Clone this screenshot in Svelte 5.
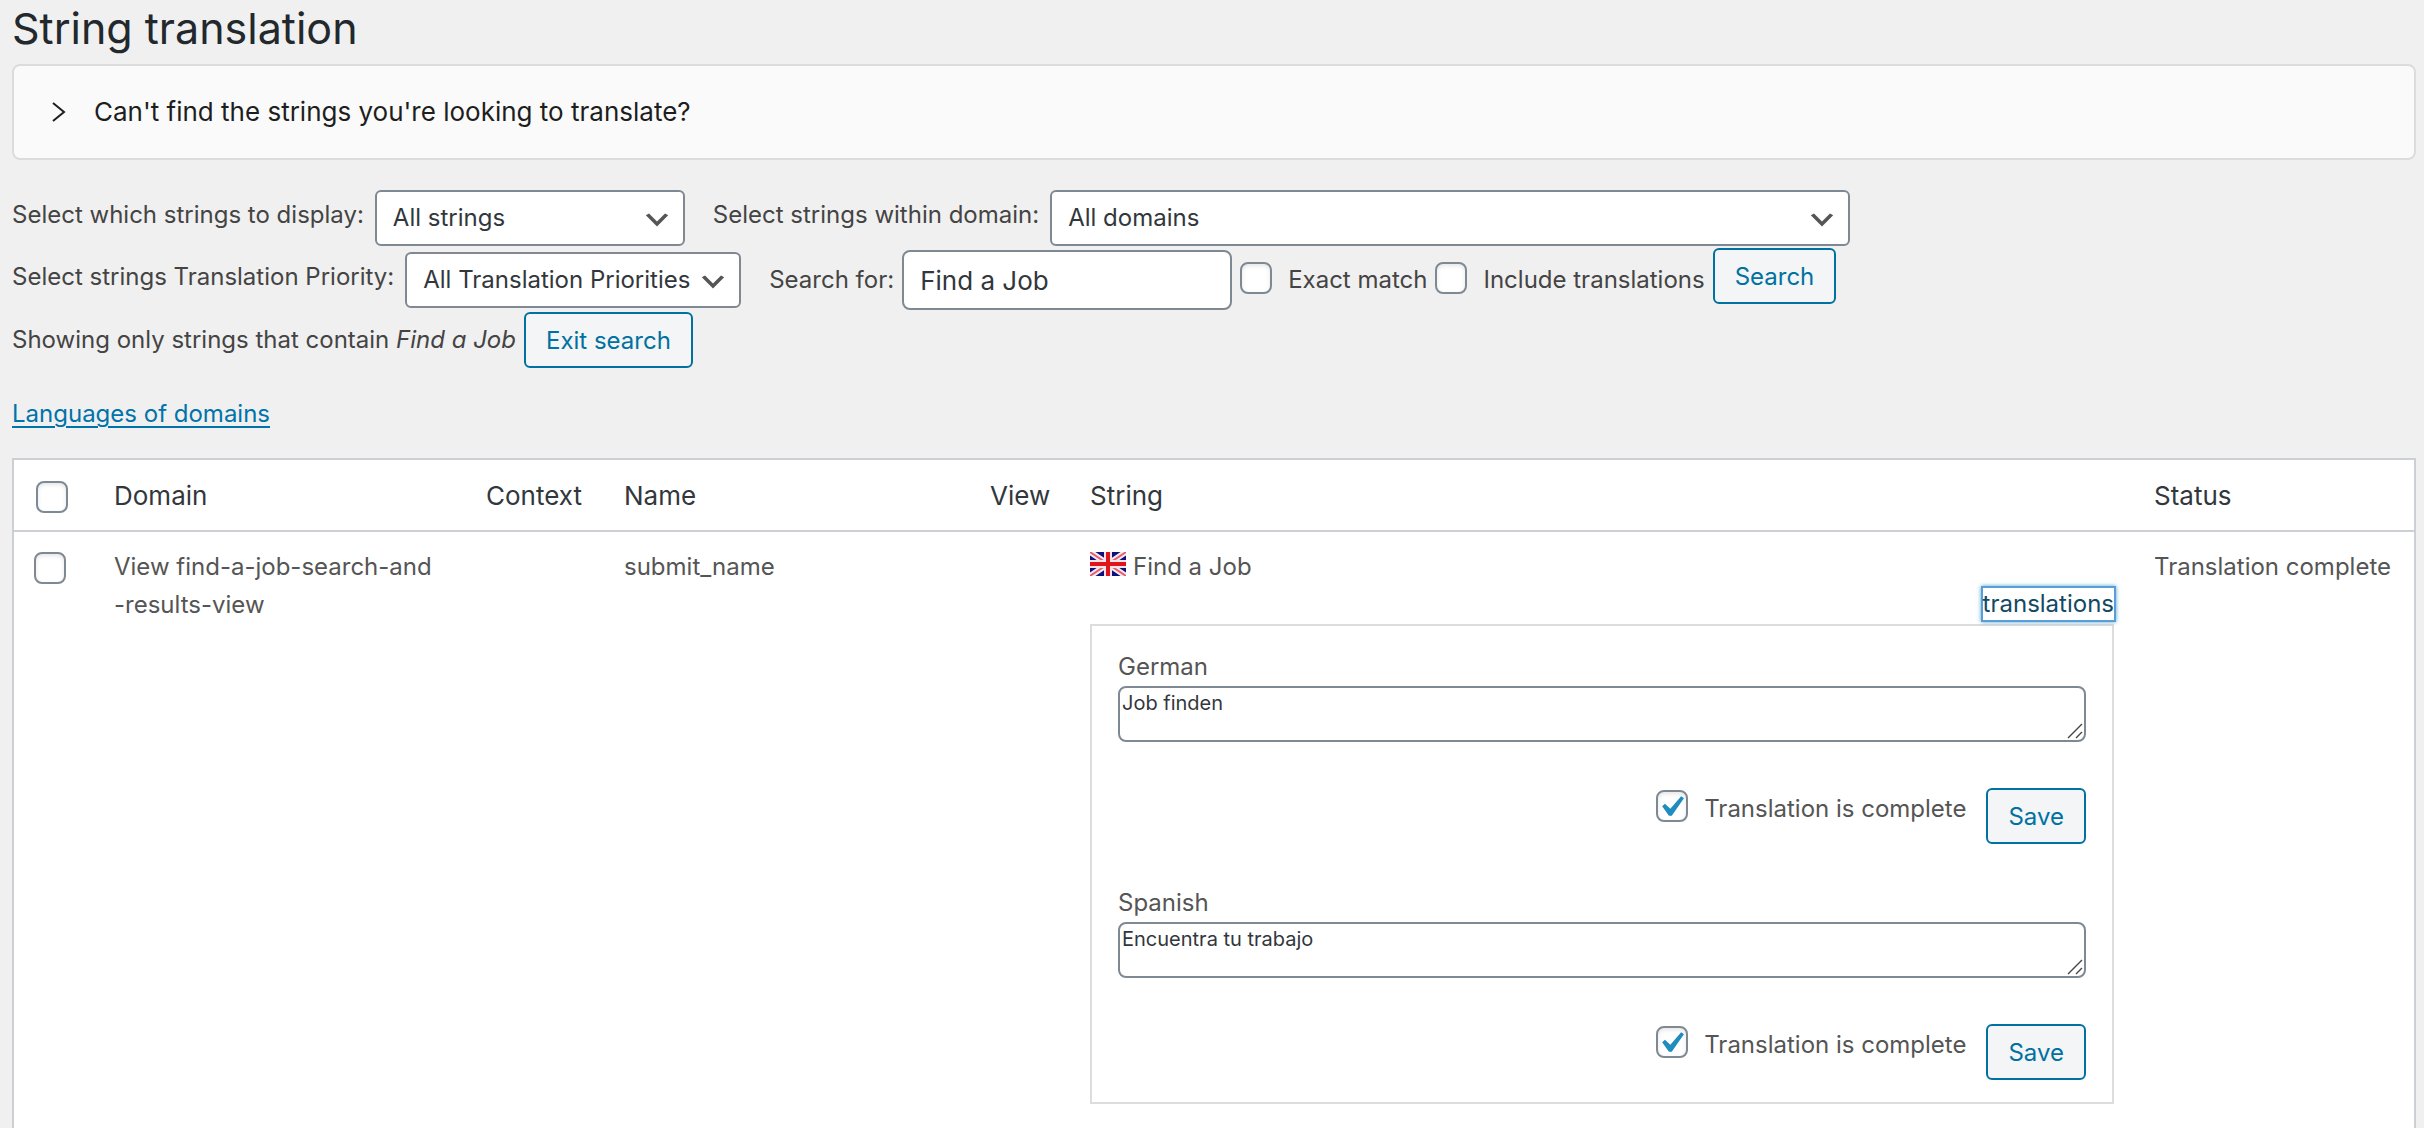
<script>
    let filter = 'all';
    let domain = 'all';
    let priority = 'all';
    let search = 'Find a Job';
    let exactMatch = false;
    let includeTranslations = false;

    const strings = [
        {
            id: 1,
            domain: ['View find-a-job-search-and', '-results-view'],
            context: '',
            name: 'submit_name',
            value: 'Find a Job',
            status: 'Translation complete',
            translations: [
                { code: 'de', language: 'German', value: 'Job finden', complete: true },
                { code: 'es', language: 'Spanish', value: 'Encuentra tu trabajo', complete: true },
            ],
        },
    ];
</script>

<div class="page">
    <h1>String translation</h1>

    <details class="help">
        <summary>
            <svg class="arrow" viewBox="0 0 14 20" aria-hidden="true">
                <path d="M1 1l11 9-11 9" />
            </svg>
            Can't find the strings you're looking to translate?
        </summary>
    </details>

    <form class="filters" on:submit|preventDefault>
        <div class="row">
            <label class="raised" for="filter">Select which strings to display:</label>
            <div class="select status">
                <select id="filter" bind:value={filter}>
                    <option value="all">All strings</option>
                </select>
                <svg viewBox="0 0 20 20" aria-hidden="true"><path d="M5 6l5 5 5-5 2 1-7 7-7-7 2-1z" /></svg>
            </div>
            <label class="raised next" for="domain">Select strings within domain:</label>
            <div class="select domain">
                <select id="domain" bind:value={domain}>
                    <option value="all">All domains</option>
                </select>
                <svg viewBox="0 0 20 20" aria-hidden="true"><path d="M5 6l5 5 5-5 2 1-7 7-7-7 2-1z" /></svg>
            </div>
        </div>

        <div class="row search">
            <label class="raised" for="priority">Select strings Translation Priority:</label>
            <div class="select priority">
                <select id="priority" bind:value={priority}>
                    <option value="all">All Translation Priorities</option>
                </select>
                <svg viewBox="0 0 20 20" aria-hidden="true"><path d="M5 6l5 5 5-5 2 1-7 7-7-7 2-1z" /></svg>
            </div>
            <label class="next" for="search">Search for:</label>
            <input id="search" type="text" bind:value={search} />
            <div class="check">
                <input id="exact" type="checkbox" bind:checked={exactMatch} />
                <label for="exact">Exact match</label>
            </div>
            <div class="check">
                <input id="include" type="checkbox" bind:checked={includeTranslations} />
                <label for="include">Include translations</label>
            </div>
            <button class="button" type="submit">Search</button>
        </div>

        <div class="row">
            <span>Showing only strings that contain <em>Find a Job</em></span>
            <button class="button" type="button">Exit search</button>
        </div>
    </form>

    <a class="domains-link" href="#domains">Languages of domains</a>

    <table>
        <colgroup>
            <col class="col-check" />
            <col class="col-domain" />
            <col class="col-context" />
            <col class="col-name" />
            <col class="col-view" />
            <col />
            <col class="col-status" />
        </colgroup>
        <thead>
            <tr>
                <th class="cell-check"><input type="checkbox" aria-label="Select all strings" /></th>
                <th>Domain</th>
                <th>Context</th>
                <th>Name</th>
                <th>View</th>
                <th>String</th>
                <th>Status</th>
            </tr>
        </thead>
        <tbody>
            {#each strings as string (string.id)}
                <tr>
                    <td class="cell-check"><input type="checkbox" aria-label="Select string" /></td>
                    <td>{string.domain[0]}<br />{string.domain[1]}</td>
                    <td>{string.context}</td>
                    <td>{string.name}</td>
                    <td></td>
                    <td>
                        <div class="original">
                            <svg class="flag" viewBox="0 0 36 24" role="img" aria-label="English">
                                <rect width="36" height="24" fill="#10107c" />
                                <path d="M0 0l36 24M36 0L0 24" stroke="#f3eef4" stroke-width="6" />
                                <path d="M0 0l36 24M36 0L0 24" stroke="#e8626c" stroke-width="2" />
                                <path d="M18 0v24M0 12h36" stroke="#f3e4e8" stroke-width="8" />
                                <path d="M18 0v24M0 12h36" stroke="#e0141c" stroke-width="4" />
                            </svg>
                            <span>{string.value}</span>
                        </div>
                        <div class="toggle"><a href="#translations">translations</a></div>
                        <div class="translations">
                            {#each string.translations as item (item.code)}
                                <div class="translation">
                                    <label for="text-{item.code}">{item.language}</label>
                                    <div class="textarea">
                                        <textarea id="text-{item.code}" spellcheck="false" bind:value={item.value}></textarea>
                                        <svg viewBox="0 0 16 16" aria-hidden="true">
                                            <path d="M1 15L15 1M9 15l6-6" />
                                        </svg>
                                    </div>
                                    <div class="actions">
                                        <input id="complete-{item.code}" type="checkbox" bind:checked={item.complete} />
                                        <label for="complete-{item.code}">Translation is complete</label>
                                        <button class="button" type="button">Save</button>
                                    </div>
                                </div>
                            {/each}
                        </div>
                    </td>
                    <td>{string.status}</td>
                </tr>
            {/each}
        </tbody>
    </table>
</div>

<style>
    :global(body) {
        background: #f0f0f0;
    }
    .page {
        box-sizing: border-box;
        height: 100vh;
        overflow-y: auto;
        scrollbar-width: none;
        padding: 0 8px 0 12px;
        color: #444;
        font-family: Inter, "Liberation Sans", sans-serif;
        font-size: 24px;
        line-height: 38px;
    }
    h1 {
        margin: 0;
        padding-bottom: 8px;
        color: #23282d;
        font-size: 43px;
        font-weight: 400;
        line-height: 56px;
    }
    .help {
        border: 2px solid #dcdcde;
        border-radius: 8px;
        background: #fafafa;
    }
    summary {
        display: flex;
        align-items: center;
        gap: 28px;
        padding: 27px 38px;
        color: #1e1e1e;
        font-size: 26px;
        list-style: none;
        cursor: pointer;
    }
    .arrow {
        width: 14px;
        height: 20px;
        fill: none;
        stroke: #1e1e1e;
        stroke-width: 2;
    }
    .filters {
        display: flex;
        flex-direction: column;
        gap: 2px;
        padding: 30px 0 27px;
    }
    .row {
        display: flex;
        align-items: center;
        gap: 8px;
        white-space: nowrap;
    }
    .row.search {
        height: 64px;
        margin-bottom: -2px;
    }
    .raised {
        margin-bottom: 6px;
    }
    .next {
        margin-left: 20px;
    }
    select,
    input,
    textarea,
    button {
        box-sizing: border-box;
        margin: 0;
        font-family: inherit;
    }
    .select {
        position: relative;
        margin-left: 3px;
    }
    .status {
        width: 310px;
    }
    .domain {
        width: 800px;
    }
    .priority {
        width: 336px;
    }
    select {
        display: block;
        width: 100%;
        height: 56px;
        padding: 0 48px 2px 16px;
        border: 2px solid #7e8993;
        border-radius: 6px;
        background: #fff;
        color: #32373c;
        font-size: 24px;
        appearance: none;
    }
    .select svg {
        position: absolute;
        top: 14px;
        right: 12px;
        width: 32px;
        height: 32px;
        fill: #555;
        pointer-events: none;
    }
    input[type="text"] {
        width: 330px;
        height: 60px;
        padding: 0 16px;
        border: 2px solid #7e8993;
        border-radius: 8px;
        background: #fff;
        color: #32373c;
        font-size: 26px;
    }
    input[type="checkbox"] {
        display: block;
        flex: none;
        width: 32px;
        height: 32px;
        border: 2px solid #7e8993;
        border-radius: 8px;
        background: #fff;
        box-shadow: inset 0 2px 4px rgba(0, 0, 0, 0.1);
        appearance: none;
    }
    input[type="checkbox"]:checked::before {
        content: url("data:image/svg+xml;utf8,%3Csvg%20xmlns%3D%27http%3A%2F%2Fwww.w3.org%2F2000%2Fsvg%27%20width%3D%2742%27%20height%3D%2742%27%20viewBox%3D%270%200%2020%2020%27%3E%3Cpath%20d%3D%27M14.83%204.89l1.34.94-5.81%208.38H9.02L5.78%209.67l1.34-1.25%202.57%202.4z%27%20fill%3D%27%231e8cbe%27%2F%3E%3C%2Fsvg%3E");
        display: block;
        width: 42px;
        height: 42px;
        margin: -6px 0 0 -8px;
    }
    .check {
        display: flex;
        align-items: center;
        gap: 16px;
    }
    .check input {
        margin-bottom: 4px;
    }
    .button {
        height: 56px;
        padding: 0 20px;
        border: 2px solid #0071a1;
        border-radius: 6px;
        background: #f3f5f6;
        color: #0071a1;
        font-size: 24px;
    }
    .search .button {
        margin-bottom: 8px;
    }
    .domains-link {
        display: inline-block;
        margin-bottom: 25px;
        color: #0073aa;
        text-decoration-thickness: 2px;
        text-underline-offset: 4px;
    }

    table {
        width: 100%;
        border: 2px solid #ccd0d4;
        border-spacing: 0;
        background: #fff;
        color: #555;
        table-layout: fixed;
    }
    .col-check {
        width: 80px;
    }
    .col-domain {
        width: 372px;
    }
    .col-context {
        width: 138px;
    }
    .col-name {
        width: 366px;
    }
    .col-view {
        width: 100px;
    }
    .col-status {
        width: 280px;
    }
    th {
        padding: 17px 20px 15px;
        border-bottom: 2px solid #ccd0d4;
        color: #32373c;
        font-size: 26px;
        font-weight: 400;
        text-align: left;
    }
    th.cell-check {
        padding: 20px 22px 16px;
    }
    td {
        padding: 16px 20px 40px;
        vertical-align: top;
    }
    td.cell-check {
        padding-top: 20px;
    }
    .original {
        display: flex;
        gap: 7px;
    }
    .flag {
        width: 36px;
        height: 24px;
        margin-top: 4px;
    }
    .toggle {
        display: flex;
        justify-content: flex-end;
        padding: 2px 0 4px;
    }
    .toggle a {
        color: #124964;
        line-height: 32px;
        text-decoration: none;
        box-shadow:
            0 0 0 2px #5b9dd9,
            0 0 4px 2px rgba(30, 140, 190, 0.8);
    }
    .translations {
        display: flex;
        flex-direction: column;
        gap: 40px;
        padding: 22px 26px;
        border: 2px solid #ddd;
    }
    .translation > label {
        display: block;
    }
    .textarea {
        position: relative;
    }
    textarea {
        display: block;
        width: 100%;
        height: 56px;
        padding: 0 2px;
        border: 2px solid #7e8993;
        border-radius: 8px;
        color: #32373c;
        font-size: 20px;
        line-height: 30px;
        resize: none;
    }
    .textarea svg {
        position: absolute;
        right: 3px;
        bottom: 3px;
        width: 16px;
        height: 16px;
        fill: none;
        stroke: #444;
        stroke-width: 1.4;
        pointer-events: none;
    }
    .actions {
        display: flex;
        justify-content: flex-end;
        align-items: flex-start;
        margin-top: 46px;
    }
    .actions input {
        margin-top: 2px;
    }
    .actions label {
        margin: 0 20px 0 16px;
        line-height: 42px;
    }
</style>
